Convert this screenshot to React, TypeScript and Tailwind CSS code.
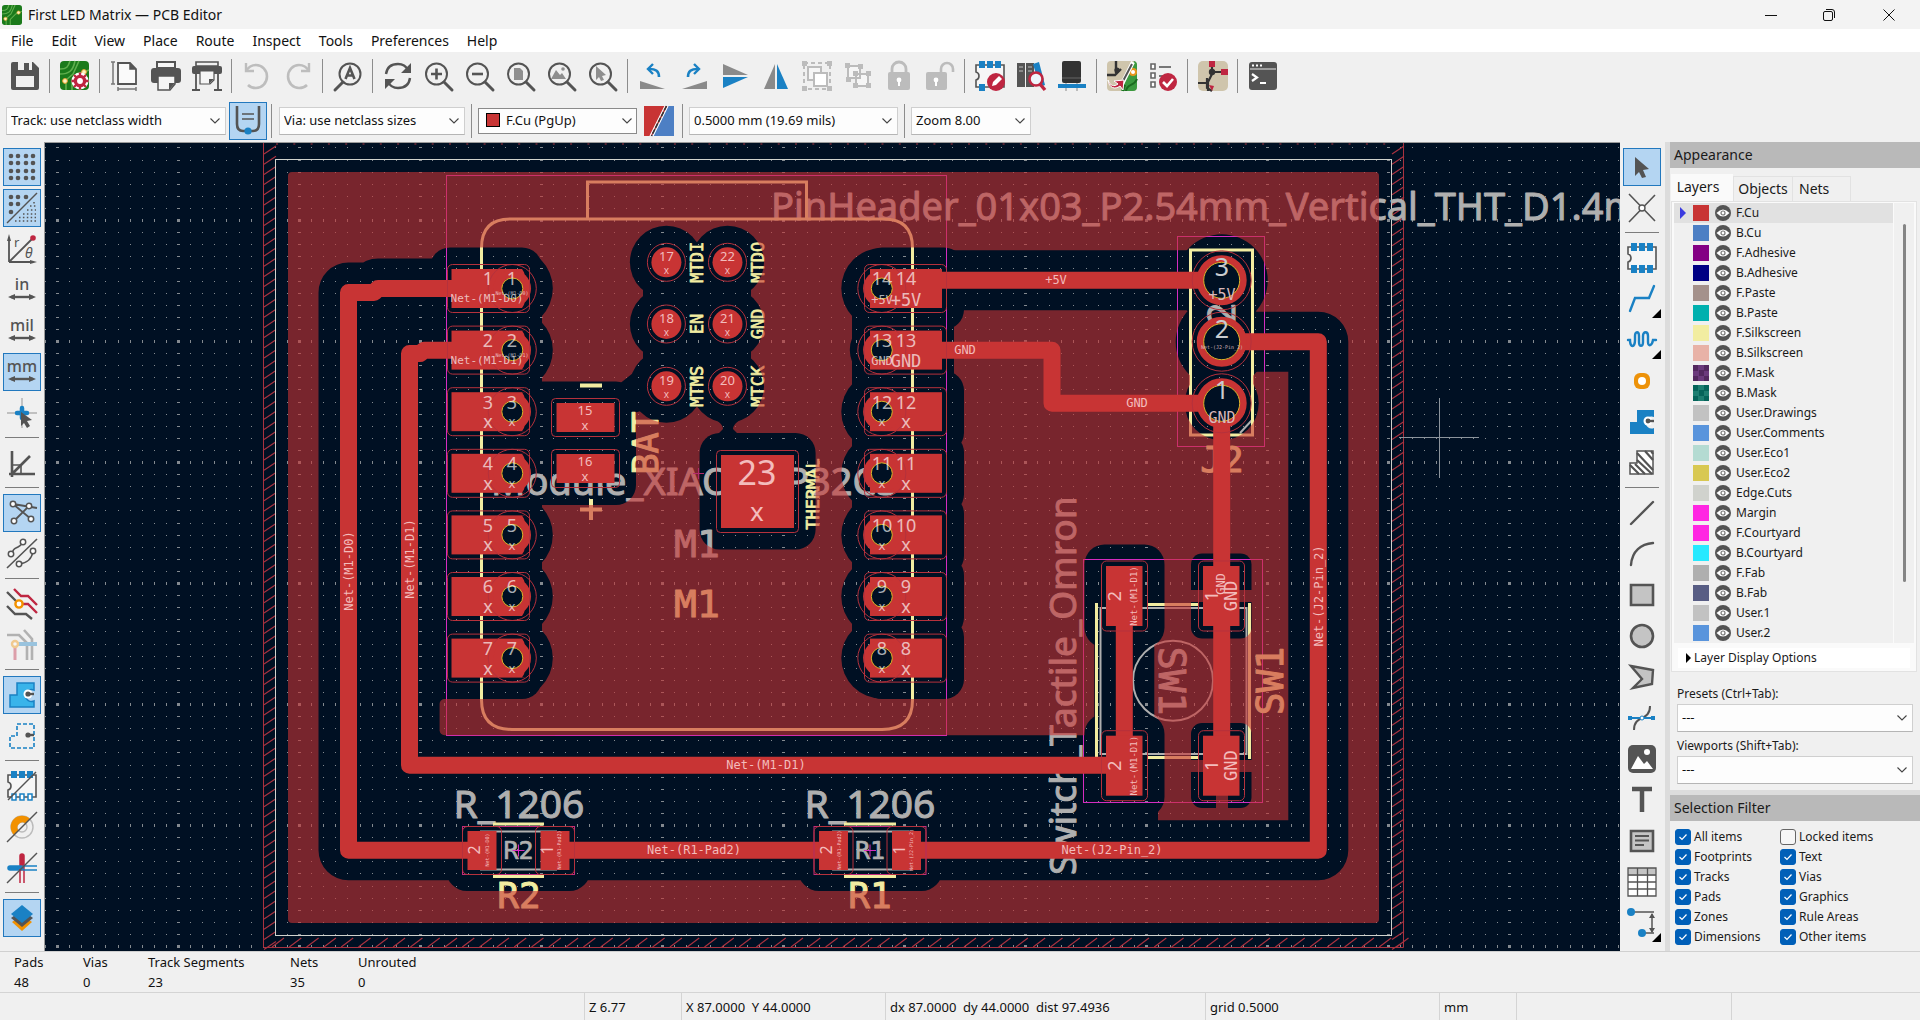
import React from "react";

const G = "#545454";
const B = "#1a81c4";
const R = "#bf2641";
const CU = "#c83434";
const SILK = "#f2eda1";
const FAB = "#afafaf";
const MONO = "'DejaVu Sans Mono', monospace";
const SANS = "'Noto Sans', sans-serif";

type IconProps = { children: React.ReactNode; className?: string };

function Ico({ children, className = "" }: IconProps) {
  return (
    <svg viewBox="0 0 30 30" aria-hidden="true" className={`h-[30px] w-[30px] overflow-visible ${className}`} fill="none">
      {children}
    </svg>
  );
}

/* ---------- top toolbar icons ---------- */

const Magnifier = ({ children }: { children?: React.ReactNode }) => (
  <Ico>
    <circle cx="12.5" cy="13" r="10.5" stroke={G} strokeWidth="2" />
    <path d="M20 21l8 8" stroke={G} strokeWidth="3" strokeLinecap="round" />
    {children}
  </Ico>
);

const boardArt = (
  <>
    <rect width="29" height="29" rx="4" fill="#1b7a1b" />
    <path d="M0 8c7 0 8-2 10-8M0 13c9 0 13-3 15-13M6 29V19l7-6 6-13M12 29v-8l8-8 9-4" stroke="#5fae4d" strokeWidth="1.6" />
    <circle cx="5" cy="20" r="2.4" fill="#fff3c4" stroke="#e8a32c" />
    <circle cx="24" cy="11" r="2.4" fill="#fff3c4" stroke="#e8a32c" />
  </>
);

const IconSave = () => (
  <Ico>
    <path d="M1 3a2 2 0 012-2h20l6 6v20a2 2 0 01-2 2H3a2 2 0 01-2-2z" fill={G} />
    <path d="M8 1h14v8H8zM6 15h18v11H6z" fill="#f0f0f0" />
    <path d="M14 2h5v7h-5z" fill={G} />
  </Ico>
);
const IconBoardSetup = () => (
  <Ico>
    {boardArt}
    <circle cx="20" cy="20" r="5" stroke="#fff" strokeWidth="7" />
    <circle cx="20" cy="20" r="4.6" stroke={R} strokeWidth="3.4" />
    <path d="M20 11.500v4M20 24.500v4M11.500 20h4M24.500 20h4M14 14l3 3M23 23l3 3M26 14l-3 3M17 23l-3 3" stroke={R} strokeWidth="2.400" />
    <circle cx="20" cy="20" r="2.400" fill="#fff" />
  </Ico>
);
const IconPage = () => (
  <Ico>
    <path d="M8 2h12l6 6v15H8z" fill="#fafafa" stroke={G} strokeWidth="1.800" />
    <path d="M20 2v6h6" fill={G} stroke={G} strokeWidth="1.500" />
    <path d="M3 1v22M1 1h4M1 23h4M8 28h18M8 26v4M26 26v4" stroke="#777" strokeWidth="1.500" />
  </Ico>
);
const IconPrint = () => (
  <Ico>
    <path d="M6 1h18v6H6z" stroke={G} strokeWidth="2" fill="#f5f5f5" />
    <rect y="7" width="30" height="15" rx="3" fill={G} />
    <path d="M7 15h17v8l-5 6H7z" fill="#f5f5f5" stroke={G} strokeWidth="1.500" />
    <path d="M24 22l-6 7v-7z" fill={G} />
  </Ico>
);
const IconPlot = () => (
  <Ico>
    <path d="M4 1h22v4H4z" stroke={G} strokeWidth="1.600" />
    <rect y="5" width="30" height="8" rx="2" fill={G} />
    <path d="M4 13v15M26 13v15M0 29h8M22 29h8" stroke={G} strokeWidth="1.800" />
    <path d="M8 10h14v9l-4 4H8z" fill="#f5f5f5" stroke={G} strokeWidth="1.200" />
    <path d="M22 18l-5 5v-5z" fill={G} />
  </Ico>
);
const IconUndo = () => (
  <Ico>
    <path d="M4 2v8h8" stroke="#bdbdbd" strokeWidth="2.400" />
    <path d="M4 10c3-5 6-6 10-6a10.500 11 0 110 23c-3 0-6-1-8-3" stroke="#bdbdbd" strokeWidth="2.600" />
  </Ico>
);
const IconRedo = () => (
  <Ico>
    <path d="M26 2v8h-8" stroke="#bdbdbd" strokeWidth="2.400" />
    <path d="M26 10c-3-5-6-6-10-6a10.500 11 0 100 23c3 0 6-1 8-3" stroke="#bdbdbd" strokeWidth="2.600" />
  </Ico>
);
const IconFind = () => (
  <Ico>
    <circle cx="17" cy="13" r="10.500" stroke={G} strokeWidth="2" />
    <path d="M10 21l-8 8" stroke={G} strokeWidth="3" strokeLinecap="round" />
    <path d="M12.500 18L17 7l4.500 11M14 14.500h6" stroke={G} strokeWidth="2.600" />
  </Ico>
);
const IconRefresh = () => (
  <Ico>
    <path d="M3 13C4 6 9 3 15 3c5 0 8 2 10 6M27 17c-1 7-6 10-12 10-5 0-8-2-10-6" stroke={G} strokeWidth="2.400" />
    <path d="M28 2v10H18zM2 28V18h10z" fill={G} />
  </Ico>
);
const IconRotL = () => (
  <Ico>
    <path d="M2 20v8h25z" fill="#8a8a8a" />
    <path d="M21 16c0-6-3-8-10-8" stroke={B} strokeWidth="2.600" />
    <path d="M15 3l-5 5 5 5" stroke={B} strokeWidth="2.400" />
  </Ico>
);
const IconRotR = () => (
  <Ico>
    <path d="M28 20v8H3z" fill="#8a8a8a" />
    <path d="M9 16c0-6 3-8 10-8" stroke={B} strokeWidth="2.600" />
    <path d="M15 3l5 5-5 5" stroke={B} strokeWidth="2.400" />
  </Ico>
);
const IconFlipV = () => (
  <Ico>
    <path d="M3 3l25 11H3z" fill="#8a8a8a" />
    <path d="M3 27l25-11H3z" fill={B} />
  </Ico>
);
const IconFlipH = () => (
  <Ico>
    <path d="M14 3v25H3z" fill="#8a8a8a" />
    <path d="M16 3v25h11z" fill={B} />
  </Ico>
);
const IconGroup = () => (
  <Ico>
    <path d="M2 2h26v26H2z" stroke="#bcbcbc" strokeWidth="2" strokeDasharray="4 3" />
    <path d="M0 0h5v5H0zM25 0h5v5h-5zM0 25h5v5H0zM25 25h5v5h-5z" fill="#bcbcbc" />
    <path d="M6 6h13v13H6z" fill="#f6f6f6" stroke="#bcbcbc" strokeWidth="2" />
    <path d="M12 12h13v13H12z" fill="#fff" stroke="#bcbcbc" strokeWidth="2" />
  </Ico>
);
const IconUngroup = () => (
  <Ico>
    <path d="M5 5h12v12H5zM13 13h12v12H13z" fill="#f6f6f6" stroke="#bcbcbc" strokeWidth="2" />
    <path d="M2 2h5v5H2zM15 3h5v5h-5zM3 16h5v5H3zM10 10h5v5h-5zM23 10h5v5h-5zM10 22h5v5h-5zM23 22h5v5h-5z" fill="#bcbcbc" />
  </Ico>
);
const IconLock = () => (
  <Ico>
    <path d="M8 14V8a7 7 0 0114 0v6" stroke="#bcbcbc" strokeWidth="2.800" />
    <rect x="4" y="11" width="22" height="18" rx="2" fill="#bcbcbc" />
    <circle cx="15" cy="19" r="2.400" fill="#fff" />
    <path d="M15 19v6" stroke="#fff" strokeWidth="2" />
  </Ico>
);
const IconUnlock = () => (
  <Ico>
    <path d="M16 14V8a6 6 0 0112 0v3" stroke="#bcbcbc" strokeWidth="2.600" />
    <rect x="1" y="11" width="21" height="18" rx="2" fill="#bcbcbc" />
    <circle cx="11" cy="19" r="2.400" fill="#fff" />
    <path d="M11 19v6" stroke="#fff" strokeWidth="2" />
  </Ico>
);
const chipBody = (
  <path d="M1 4h28v22H1v-7c4-1 4-7 0-8z" fill="#f6f6f6" stroke={G} strokeWidth="1.600" />
);
const IconFootprintEdit = () => (
  <Ico>
    {chipBody}
    <path d="M4 0h6v7H4zM12 0h6v7h-6zM20 0h6v7h-6zM4 23h6v7H4z" fill={B} />
    <circle cx="21" cy="21" r="9" fill={R} />
    <path d="M17 25l1-4 6-6 3 3-6 6z" fill="#fff" />
  </Ico>
);
const IconLibrary = () => (
  <Ico>
    <path d="M1 2h8v24H1zM10 2h8v24h-8z" fill={G} />
    <path d="M3 6h4M12 6h4M3 10h4M12 10h4" stroke="#999" strokeWidth="1.500" />
    <path d="M17 3l6-2 6 23-5 2z" fill={B} />
    <circle cx="20" cy="18" r="6.500" fill="#eef5fb" stroke={R} strokeWidth="2.600" />
    <path d="M24 23l5 6" stroke={R} strokeWidth="3.400" />
  </Ico>
);
const Icon3D = () => (
  <Ico>
    <rect x="5" y="0" width="19" height="22" rx="2" fill="#333" />
    <path d="M5 17h19" stroke="#666" />
    <path d="M9 22v8M20 22v8" stroke="#aaa" strokeWidth="1.500" />
    <path d="M1 23h28v4H1z" fill={B} />
  </Ico>
);
const tan = "#cfc5ac";
const IconUpdate = () => (
  <Ico>
    <rect width="30" height="30" rx="4" fill={tan} />
    <path d="M27 0L14 30h12a4 4 0 004-4V4a4 4 0 00-3-4z" fill="#3b9a3f" />
    <path d="M19 30c1-8 8-4 11-12M16 30l2-6" stroke="#1b6b20" strokeWidth="2" />
    <circle cx="26" cy="11" r="3" fill="#fff" stroke="#e8951d" strokeWidth="2" />
    <path d="M9 0v12M0 14h8l6-6" stroke="#333" strokeWidth="2.400" />
    <circle cx="10" cy="9" r="2.600" fill="#333" />
    <path d="M26 1L15 23" stroke="#fff" strokeWidth="4" />
    <path d="M25 3L15 22" stroke={G} strokeWidth="2" />
    <path d="M1 19c2 6 6 7 10 4l-4-3 10-1-1 10-3-4c-5 4-11 2-12-6z" fill={R} stroke="#fff" strokeWidth="1" />
  </Ico>
);
const IconDrc = () => (
  <Ico>
    <path d="M3 3h4v5H3zM3 12h4v5H3zM3 21h4v5H3z" fill="#fff" stroke="#666" strokeWidth="1.600" />
    <path d="M11 6h12M11 15h8" stroke="#777" strokeWidth="2" />
    <circle cx="20" cy="21" r="9" fill={R} />
    <path d="M15 21l4 4 6-7" stroke="#fff" strokeWidth="2.600" />
  </Ico>
);
const IconSchematic = () => (
  <Ico>
    <rect width="30" height="30" rx="5" fill={tan} />
    <path d="M14 4v9l-4 8v9M14 11h12M0 22h10M9 17v10l5 3" stroke="#333" strokeWidth="2.200" />
    <circle cx="14" cy="11" r="3.200" fill="#333" />
    <path d="M11 0h6v6h-6zM23 8h7v6h-7z" fill={R} />
    <path d="M11 24l5 1-2 5z" fill={R} />
  </Ico>
);
const IconTerminal = () => (
  <Ico>
    <rect x="1" y="1" width="28" height="28" rx="3" fill={G} />
    <path d="M2 8h26" stroke="#e8e8e8" strokeWidth="1" />
    <path d="M4 4.500h2M8 4.500h2M12 4.500h2" stroke="#fff" strokeWidth="1.800" />
    <path d="M4 13l5 3.500L4 20M12 22h6" stroke="#fff" strokeWidth="2.200" />
  </Ico>
);

const topIcons: [string, React.ReactNode][] = [
  ["Save", <IconSave />],
  ["|", null],
  ["Board Setup", <IconBoardSetup />],
  ["|", null],
  ["Page Settings", <IconPage />],
  ["Print", <IconPrint />],
  ["Plot", <IconPlot />],
  ["|", null],
  ["Undo", <IconUndo />],
  ["Redo", <IconRedo />],
  ["|", null],
  ["Find", <IconFind />],
  ["|", null],
  ["Refresh", <IconRefresh />],
  ["Zoom In", <Magnifier><path d="M7 13h11M12.500 7.500v11" stroke={G} strokeWidth="2.600" /></Magnifier>],
  ["Zoom Out", <Magnifier><path d="M7 13h11" stroke={G} strokeWidth="2.600" /></Magnifier>],
  ["Zoom to Fit", <Magnifier><path d="M8 7h6l3 3v9H8z" fill="#8e8e8e" /></Magnifier>],
  ["Zoom to Objects", <Magnifier><path d="M4 18l5-9 4 5 2-2 4 6z" fill="#8e8e8e" /><circle cx="16" cy="8" r="1.800" fill="#8e8e8e" /></Magnifier>],
  ["Zoom to Selection", <Magnifier><path d="M8 5l10 9-4 1 2 4-3 1-2-4-3 3z" fill="#8e8e8e" /></Magnifier>],
  ["|", null],
  ["Rotate Counterclockwise", <IconRotL />],
  ["Rotate Clockwise", <IconRotR />],
  ["Mirror Vertically", <IconFlipV />],
  ["Mirror Horizontally", <IconFlipH />],
  ["Group", <IconGroup />],
  ["Ungroup", <IconUngroup />],
  ["Lock", <IconLock />],
  ["Unlock", <IconUnlock />],
  ["|", null],
  ["Footprint Editor", <IconFootprintEdit />],
  ["Footprint Browser", <IconLibrary />],
  ["3D Viewer", <Icon3D />],
  ["|", null],
  ["Update PCB", <IconUpdate />],
  ["Design Rules Checker", <IconDrc />],
  ["|", null],
  ["Schematic Editor", <IconSchematic />],
  ["|", null],
  ["Scripting Console", <IconTerminal />],
];

/* ---------- side toolbar icons ---------- */

const unitIcon = (label: string) => (
  <Ico>
    <text x="15" y="15" textAnchor="middle" fontSize="16" fontWeight="500" fill={G} fontFamily={SANS}>{label}</text>
    <path d="M4 22h22" stroke={G} strokeWidth="2.400" />
    <path d="M1 22l7-3v6zM29 22l-7-3v6z" fill={G} />
  </Ico>
);

const gridDots = [4, 11, 19, 26];

const leftIcons: [string, React.ReactNode, boolean?][] = [
  ["Grid", <Ico>{gridDots.map((y) => gridDots.map((x) => <circle key={`${x}-${y}`} cx={x} cy={y} r="2.300" fill={G} />))}</Ico>, true],
  ["Grid Overrides", (
    <Ico>
      {[[4, 4], [11, 4], [19, 4], [4, 11], [11, 11], [4, 19]].map(([x, y]) => <circle key={`${x}-${y}`} cx={x} cy={y} r="2.300" fill={G} />)}
      <path d="M0 30L30 0" stroke={G} strokeWidth="1.500" />
      <path d="M27 9v3M23 13h6M20 17h9M16 21h13M12 24.500h17M8 28h21" stroke={G} strokeWidth="1.500" strokeDasharray="1.500 2.400" />
    </Ico>
  ), true],
  ["Polar Coordinates", (
    <Ico>
      <path d="M2 28V4M2 28h24M2 28L26 4" stroke={G} strokeWidth="1.800" />
      <path d="M0 7l2-7 2 7zM23 26l7 2-7 2z" fill={G} />
      <circle cx="26" cy="4" r="2.800" fill={R} />
      <text x="7" y="13" fontSize="13" fill={G} fontFamily={SANS}>r</text>
      <text x="18" y="24" fontSize="14" fontStyle="italic" fill={G} fontFamily={SANS}>θ</text>
    </Ico>
  )],
  ["Inches", unitIcon("in")],
  ["Mils", unitIcon("mil")],
  ["Millimeters", unitIcon("mm"), true],
  ["Full-Window Crosshairs", (
    <Ico>
      <path d="M15 0v30M0 15h30" stroke="#b0b0b0" strokeWidth="1.400" />
      <path d="M15 10v10M10 15h10" stroke={B} strokeWidth="4.500" strokeLinecap="round" />
      <path d="M14 14l11 8-5 1 3 5-3 2-3-5-3 3z" fill={G} />
    </Ico>
  )],
  ["|", null],
  ["Line Modes", (
    <Ico>
      <path d="M5 3v26M2 26h26M5 26L23 8" stroke={G} strokeWidth="2.600" />
      <path d="M5 17h9v9" stroke={G} strokeWidth="1.600" />
    </Ico>
  )],
  ["|", null],
  ["Ratsnest", (
    <Ico>
      <path d="M6 6l18 15M22 8L7 23M6 6l24 4" stroke={G} strokeWidth="1.800" />
      {[[6, 6], [22, 8], [7, 23], [24, 21]].map(([x, y]) => <circle key={`${x}-${y}`} cx={x} cy={y} r="2.700" fill="#fff" stroke={G} strokeWidth="1.500" />)}
    </Ico>
  ), true],
  ["Curved Ratsnest", (
    <Ico>
      <path d="M0 29L30 0M5 15c1-5 2-5 6-7s3-3 5-4M26 12c-1 8-5 12-14 13" stroke={G} strokeWidth="1.600" />
      {[[4, 15], [16, 3], [12, 25], [26, 12]].map(([x, y]) => <circle key={`${x}-${y}`} cx={x} cy={y} r="2.700" fill="#fff" stroke={G} strokeWidth="1.500" />)}
    </Ico>
  )],
  ["|", null],
  ["Net Highlight", (
    <Ico>
      <path d="M0 3l12 12M0 17l8 8h11l6 5" stroke={G} strokeWidth="2.400" />
      <path d="M7 0l7 7h7l9 9M12 15h9l9 9" stroke={R} strokeWidth="2.400" />
      <circle cx="12" cy="15" r="3.600" fill="#fff" stroke="#f29100" strokeWidth="2.400" />
    </Ico>
  )],
  ["Net Names", (
    <Ico className="opacity-40">
      <path d="M0 5h12l8 8v17M17 0l8 9v21" stroke={G} strokeWidth="2.600" />
      <path d="M8 14h22" stroke={B} strokeWidth="4" />
      <path d="M8 17v13" stroke={R} strokeWidth="3" />
      <circle cx="8" cy="14" r="3" fill="#fff" stroke="#f29100" strokeWidth="2.400" />
    </Ico>
  )],
  ["|", null],
  ["Zone Fill", (
    <Ico>
      <path d="M10 3h17v7a6 6 0 100 11v6H3V15h7z" fill="#39b4ea" stroke={B} strokeWidth="1.500" />
      <circle cx="21" cy="14" r="4.500" fill="#fff" />
      <path d="M21 14h6" stroke={G} strokeWidth="2.400" />
      <circle cx="21" cy="14" r="2.600" fill={G} />
    </Ico>
  ), true],
  ["Zone Outlines", (
    <Ico>
      <path d="M10 3h17v24H3V15h7z" stroke={B} strokeWidth="1.600" strokeDasharray="4 2" />
      <path d="M21 14h6" stroke={G} strokeWidth="2.400" />
      <circle cx="21" cy="14" r="2.600" fill={G} />
    </Ico>
  )],
  ["|", null],
  ["Sketch Pads", (
    <Ico>
      {chipBody}
      <path d="M4 0h6v7H4zM12 0h6v7h-6zM20 0h6v7h-6z" fill={B} />
      <path d="M5 23h4v6H5zM13 23h4v6h-4zM21 23h4v6h-4z" fill="#fff" stroke={B} strokeWidth="1.500" />
      <path d="M1 29L29 1" stroke={G} strokeWidth="1.500" />
    </Ico>
  )],
  ["Sketch Vias", (
    <Ico>
      <circle cx="15" cy="15" r="11" stroke="#bbb" strokeWidth="1.400" />
      <circle cx="15" cy="15" r="5" stroke="#bbb" strokeWidth="1.400" />
      <path d="M7 23A11.300 11.300 0 1123 7l-4.500 4.500a5 5 0 00-7 7z" fill="#f29100" />
      <path d="M0 30L30 0" stroke={G} strokeWidth="1.500" />
    </Ico>
  )],
  ["Sketch Tracks", (
    <Ico>
      <path d="M15 3v12" stroke={R} strokeWidth="5.500" strokeLinecap="round" />
      <path d="M3 15h11" stroke={B} strokeWidth="5.500" strokeLinecap="round" />
      <path d="M13 16v14M17 16v14" stroke={R} strokeWidth="1.500" />
      <path d="M16 13h14M16 17h14" stroke={B} strokeWidth="1.500" />
      <path d="M0 30L30 0" stroke={G} strokeWidth="1.500" />
    </Ico>
  )],
  ["|", null],
  ["Layers Manager", (
    <Ico>
      <path d="M5 19l10-7 10 7-10 9z" fill="#f29100" />
      <path d="M4 15l11-8 11 8-11 9z" fill={G} />
      <path d="M4 11L15 2l11 9-11 9z" fill={B} />
    </Ico>
  ), true],
];

const rightIcons: [string, React.ReactNode, boolean?, boolean?][] = [
  ["Select", <Ico><path d="M8 5l14 12-6 1 3 7-4 1-3-6-4 4z" fill={G} /></Ico>, true],
  ["Local Ratsnest", (
    <Ico>
      <path d="M2 1l26 27M28 2L2 29" stroke={G} strokeWidth="1.600" />
      <circle cx="15" cy="15" r="3" fill="#fff" stroke={G} strokeWidth="1.400" />
    </Ico>
  )],
  ["|", null],
  ["Place Footprint", (
    <Ico>
      {chipBody}
      <path d="M4 0h6v8H4zM12 0h6v8h-6zM20 0h6v8h-6zM4 22h6v8H4zM12 22h6v8h-6zM20 22h6v8h-6z" fill={B} />
    </Ico>
  )],
  ["Route Track", <Ico><path d="M3 27l5-13h14l5-12" stroke={B} strokeWidth="2.400" strokeLinecap="round" /></Ico>, false, true],
  ["Tune Length", <Ico><path d="M1 15h2c0 8 5 8 5 0V11c0-5 4-5 4 0v6c0 5 4 5 4 0v-6c0-5 5-5 5 0v6c0 5 4 4 5-2h3" stroke={B} strokeWidth="2.400" strokeLinecap="round" /></Ico>, false, true],
  ["Via", (
    <Ico>
      <rect x="7" y="7" width="16" height="16" rx="6" fill="#ed9209" />
      <circle cx="15" cy="15" r="4" fill="#fff" />
    </Ico>
  )],
  ["Zone", (
    <Ico>
      <path d="M10 3h17v7a6 6 0 100 11v6H3V15h7z" fill={B} />
      <circle cx="21" cy="14" r="4.500" fill="#fff" />
      <path d="M21 14h6" stroke={G} strokeWidth="2.400" />
      <circle cx="21" cy="14" r="2.400" fill={G} />
    </Ico>
  )],
  ["Rule Area", (
    <Ico>
      <path d="M10 3h16v23H3V15h7z" fill="#fff" stroke={G} strokeWidth="1.500" />
      <path d="M10 5l16 17M10 12l15 14M18 3l8 9M8 16l10 10M3 17l9 9M24 3l2 3" stroke={G} strokeWidth="2.200" />
    </Ico>
  )],
  ["|", null],
  ["Line", <Ico><path d="M4 26L26 4" stroke={G} strokeWidth="2.400" strokeLinecap="round" /></Ico>],
  ["Arc", <Ico><path d="M4 26C5 12 14 5 26 4" stroke={G} strokeWidth="2.400" strokeLinecap="round" /></Ico>],
  ["Rectangle", <Ico><path d="M4 5h22v20H4z" fill="#c4c4c4" stroke={G} strokeWidth="2.600" /></Ico>],
  ["Circle", <Ico><circle cx="15" cy="15" r="11" fill="#c4c4c4" stroke={G} strokeWidth="2.600" /></Ico>],
  ["Polygon", <Ico><path d="M4 4l22 4-1 14-19 4 9-9z" fill="#c4c4c4" stroke={G} strokeWidth="2.400" /></Ico>],
  ["Bezier", (
    <Ico>
      <path d="M7 27c0-16 16-8 16-24" stroke={G} strokeWidth="2" />
      <path d="M2 15h26" stroke={B} strokeWidth="2" />
      <path d="M1 13h4v4H1zM24 13h4v4h-4z" fill={B} />
      <circle cx="15" cy="15" r="2" fill="#fff" stroke={B} />
    </Ico>
  )],
  ["Image", (
    <Ico>
      <rect x="1" y="1" width="28" height="28" rx="5" fill={G} />
      <path d="M4 25l7-13 6 8 3-3 6 8z" fill="#fff" />
      <circle cx="20" cy="8" r="3" fill="#fff" />
    </Ico>
  )],
  ["Text", <Ico><path d="M5 4h20M15 4v23" stroke={G} strokeWidth="4.500" /></Ico>],
  ["Text Box", (
    <Ico>
      <path d="M4 5h22v20H4z" fill="#c4c4c4" stroke={G} strokeWidth="2.600" />
      <path d="M8 10h14M8 14.500h14M8 19h9" stroke={G} strokeWidth="1.800" />
    </Ico>
  )],
  ["Table", (
    <Ico>
      <path d="M1 1h28v28H1z" fill="#fff" />
      <path d="M1 1h28v8H1z" fill="#c4c4c4" />
      <path d="M1 1h28v28H1zM1 15h28M10.500 1v28M20.500 1v28M1 22h28M1 8h28" stroke={G} strokeWidth="1.300" />
    </Ico>
  )],
  ["Dimension", (
    <Ico>
      <path d="M4 4h23M15 25h12" stroke={G} strokeWidth="1.500" />
      <path d="M25 6v18" stroke={G} strokeWidth="1.500" />
      <path d="M22 10l3-5 3 5zM22 20l3 5 3-5z" fill={G} />
      <circle cx="4" cy="4" r="4" fill={B} />
      <circle cx="15" cy="25" r="4" fill={B} />
    </Ico>
  ), false, true],
];

function SideBar({ items, label }: { items: [string, React.ReactNode, boolean?, boolean?][]; label: string }) {
  return (
    <div role="toolbar" aria-label={label} className="flex w-11 shrink-0 flex-col items-center pt-1">
      {items.map(([name, icon, active, more], i) =>
        name === "|" ? (
          <div key={i} className="flex h-[9px] w-full shrink-0 items-center px-[5px]">
            <div className="h-px w-full bg-[#7c7c7c]" />
          </div>
        ) : (
          <div key={i} className="flex h-[41px] shrink-0 items-center">
            <button
              type="button"
              aria-label={name}
              className={
                active
                  ? "relative flex h-[38px] w-[38px] items-center justify-center border border-[#2278be] bg-[#b4d5f2]"
                  : "relative flex h-[38px] w-[38px] items-center justify-center"
              }
            >
              {icon}
              {more && (
                <svg viewBox="0 0 9 9" className="absolute right-0 bottom-0 h-[9px] w-[9px]" aria-hidden="true">
                  <path d="M9 0v9H0z" fill="#000" />
                </svg>
              )}
            </button>
          </div>
        ),
      )}
    </div>
  );
}

/* ---------- board drawing ---------- */

const rowY = [0, 1, 2, 3, 4, 5, 6].map((i) => 288.5 + 61.6 * i);
const tracks: { d: string; gnd?: boolean }[] = [
  { d: "M500 288.500H378L374 292.500H348.500V850.300H480" },
  { d: "M500 350.300H424L420 353.500H409.500V765.300H1124.300V596" },
  { d: "M555 850.300H832" },
  { d: "M906 850.300H1318.300V341.700H1221.700" },
  { d: "M930 280.300H1221.700" },
  { d: "M930 350.300H1052V403.300H1221.700", gnd: true },
  { d: "M1221.700 403.300V766", gnd: true },
];
const jst = [
  { x: 666.4, n: ["17", "18", "19"], l: ["MTDI", "EN", "MTMS"], lx: 697 },
  { x: 727.5, n: ["22", "21", "20"], l: ["MTDO", "GND", "MTCK"], lx: 758 },
];
const jy = [262.3, 324, 386.3];

function gridPath() {
  let d = "";
  for (let i = -1; i < 131; i++) {
    for (let j = -7; j < 61; j++) {
      const x = Math.round(57 + 12.1 * i);
      const y = Math.round(220 + 12.1 * j);
      const mx = i % 10 === 0;
      const my = j % 10 === 0;
      if (mx && my) d += `M${x - 1} ${y - 1}h3v3h-3z`;
      else if (mx) d += `M${x - 1} ${y}h3v1h-3z`;
      else if (my) d += `M${x} ${y - 1}h1v3h-1z`;
      else d += `M${x} ${y}h1v1h-1z`;
    }
  }
  return d;
}

function hatchPath() {
  let d = "";
  for (let y = 154; y < 950; y += 10.2) d += `M264 ${y}l12 -8M1392 ${y}l12 -8`;
  for (let x = 272; x < 1400; x += 17.3) d += `M${x} 947l12 -9`;
  for (let x = 276; x < 1400; x += 17.3) d += `M${x} 144h2`;
  return d;
}

type LabelProps = {
  x: number;
  y: number;
  s: number;
  fill?: string;
  rot?: number;
  mono?: boolean;
  start?: boolean;
  pen?: number;
  children: string;
};

function Label({ x, y, s, fill = "#f3bcbc", rot = 0, mono, start, pen = 0, children }: LabelProps) {
  return (
    <text
      x={x}
      y={y}
      dy="0.36em"
      fontSize={s}
      fill={fill}
      stroke={pen ? fill : "none"}
      strokeWidth={pen}
      strokeLinejoin="round"
      fontFamily={mono ? MONO : SANS}
      textAnchor={start ? "start" : "middle"}
      transform={rot ? `rotate(${rot} ${x} ${y})` : undefined}
    >
      {children}
    </text>
  );
}

const NUM = "rgba(255,255,255,0.68)";

function Board() {
  const ring = { fill: "none", stroke: "#b5313c", strokeWidth: 1 };
  return (
    <svg
      viewBox="45 143 1575 808"
      preserveAspectRatio="xMinYMin slice"
      className="absolute inset-0 h-full w-full"
      role="img"
      aria-label="PCB layout"
    >
      <defs>
        <mask id="zone" maskUnits="userSpaceOnUse" x="280" y="160" width="1110" height="780">
          <rect x="288" y="172" width="1091" height="751" rx="4" fill="#fff" />
          <g stroke="#000" strokeWidth="60" fill="none" strokeLinejoin="round" strokeLinecap="round">
            {tracks.filter((t) => !t.gnd).map((t) => <path key={t.d} d={t.d} />)}
          </g>
          <g fill="#000">
            <rect x="370" y="310" width="90" height="520" />
            <rect x="370" y="790" width="788" height="40" />
            <rect x="378" y="290" width="70" height="60" />
            <rect x="430" y="247.500" width="112" height="451.500" rx="20" />
            {rowY.map((y, i) => (
              <React.Fragment key={y}>
                <circle cx="512.300" cy={y} r="40.500" />
                <circle cx="881.800" cy={y} r={i === 1 ? 32 : 40.5} />
                {i !== 1 && <rect x="862" y={y - 41} width="102" height="82" rx="20" />}
              </React.Fragment>
            ))}
            <rect x="852" y="285" width="102" height="370" />
            <path d="M530 381.500H616a20 20 0 0120 20V485a20 20 0 01-20 20H530z" />
            <rect x="643" y="262" width="108" height="124" />
            {jst.map((c) => jy.map((y) => <circle key={`${c.x}${y}`} cx={c.x} cy={y} r="36.500" />))}
            <path d="M618 385l20-16 10 40-14 4z" />
            <path d="M706 415q17 7 17 14l-6 6h22l-6-6q0-7 17-14z" />
            <rect x="699.600" y="433" width="116" height="116.500" rx="20" />
            <circle cx="1221.700" cy="280.300" r="46" />
            <circle cx="1221.700" cy="342" r="46" />
            <circle cx="1221.700" cy="403.300" r="37" />
            <rect x="1190" y="290" width="63" height="110" />
            <rect x="1084.500" y="544.500" width="80" height="103" rx="20" />
            <rect x="1084.500" y="714" width="80" height="103" rx="20" />
            <rect x="1191" y="553.500" width="60.500" height="85" rx="11" />
            <rect x="1191" y="723" width="60.500" height="85" rx="11" />
            <rect x="446" y="810" width="144.500" height="81" rx="21" />
            <rect x="798" y="810" width="144.500" height="81" rx="21" />
          </g>
          <g fill="#fff">
            <path d="M1190 590h62v12h-62zM1190 760h62v12h-62zM1216 795h12v15h-12z" />
            <rect x="439.600" y="699" width="120" height="36.300" rx="5" />
          </g>
        </mask>
      </defs>

      <rect x="45" y="143" width="3000" height="2000" fill="#001023" />
      <path d={gridPath()} fill="#848a90" shapeRendering="crispEdges" />

      {/* hatched margin and board edge */}
      <path d={hatchPath()} stroke="#a8323f" strokeWidth="1.200" fill="none" />
      <path d="M263.500 143V947.500H1403.500V143" stroke="#a8323f" fill="none" />
      <rect x="275.500" y="159.500" width="1116" height="776" fill="none" stroke="#d0d2cd" />

      {/* courtyards */}
      <g fill="none" stroke="#d42cc0" strokeWidth="1">
        <rect x="446.500" y="175.500" width="500" height="560" />
        <rect x="1177.500" y="236.500" width="87" height="210" />
        <rect x="1083.500" y="559.500" width="179" height="243" />
      </g>

      {/* fabrication layer */}
      <g fill="none" stroke={FAB} strokeWidth="2">
        <rect x="1100.500" y="608" width="146" height="146" />
        <circle cx="1173" cy="680.700" r="40" />
        <path d="M480 831.500H557M480 869.500H557M832 831.500H909M832 869.500H909" />
        <path d="M1240 433l13-14" />
      </g>
      <Label x={771} y={206} s={38} fill={FAB} start pen={1}>PinHeader_01x03_P2.54mm_Vertical_THT_D1.4mm</Label>
      <Label x={491} y={481} s={38} fill={FAB} start pen={1}>Module_XIAO-ESP32C3</Label>
      <Label x={697} y={543} s={38} fill={FAB} mono pen={1}>M1</Label>
      <Label x={1063} y={875} s={37} fill={FAB} start rot={-90} pen={1}>Switch_Tactile_Omron</Label>
      <Label x={1173} y={681} s={38} fill={FAB} rot={90} mono pen={1}>SW1</Label>
      <Label x={1221} y={325} s={38} fill={FAB} rot={-90} mono pen={1}>J2</Label>
      <Label x={519} y={804} s={39} fill={FAB} pen={1}>R_1206</Label>
      <Label x={870} y={804} s={39} fill={FAB} pen={1}>R_1206</Label>

      {/* silkscreen */}
      <g fill="none" stroke={SILK} strokeWidth="3">
        <path d="M481.500 700V248Q481.500 219 510 219H884Q912.500 219 912.500 248V700Q912.500 729.500 882 729.500H512Q481.500 729.500 481.500 700z" />
        <path d="M587.500 219V182H806.500V219" />
        <rect x="1190.500" y="250" width="62" height="185" />
        <path d="M1096.500 603V757M1249.500 603V759M1148 604.500H1198M1148 757.500H1198" />
        <path d="M493 824H544M493 876.500H544M844 824H896M844 876.500H896" />
        <path d="M580 385.500H602M580 509.500H602M591 499V520" strokeWidth="4" />
      </g>
      {jst.map((c) => c.l.map((t, i) => <Label key={t} x={c.lx} y={jy[i]} s={17} fill={SILK} rot={-90} mono pen={0.7}>{t}</Label>))}
      <Label x={645} y={443} s={35} fill={SILK} rot={-90} mono pen={1}>BAT</Label>
      <Label x={813} y={494} s={17} fill={SILK} rot={-90} mono pen={0.7}>THERMAL</Label>
      <Label x={697} y={603} s={38} fill={SILK} mono pen={1}>M1</Label>
      <Label x={1222} y={459} s={36} fill={SILK} mono pen={1}>J2</Label>
      <Label x={1269} y={681} s={38} fill={SILK} rot={-90} mono pen={1}>SW1</Label>
      <Label x={519} y={895} s={36} fill={SILK} mono pen={1}>R2</Label>
      <Label x={870} y={895} s={36} fill={SILK} mono pen={1}>R1</Label>

      {/* filled copper zone */}
      <rect x="288" y="172" width="1091" height="751" fill={CU} opacity="0.6" mask="url(#zone)" />

      {/* tracks */}
      <g stroke={CU} strokeWidth="17" fill="none" strokeLinejoin="round" strokeLinecap="round">
        {tracks.map((t) => <path key={t.d} d={t.d} />)}
      </g>

      {/* module castellated pads */}
      {rowY.map((y, i) => (
        <g key={y}>
          <rect x="451.500" y={y - 19.5} width="73" height="39" fill={CU} />
          <circle cx="512.300" cy={y} r="18.700" fill={CU} />
          <rect x="870" y={y - 19.5} width="72" height="39" fill={CU} />
          <circle cx="881.800" cy={y} r="18.700" fill={CU} />
          <path d={`M522 ${y - 19.5}l3 5v-5zM522 ${y + 19.5}l3 -5v5z`} fill="#001023" />
          <rect x="447.500" y={y - 24} width="82" height="48" rx="5" {...ring} />
          <circle cx="512.300" cy={y} r="24" {...ring} />
          <rect x="864.500" y={y - 24} width="82" height="48" rx="5" {...ring} />
          <circle cx="881.800" cy={y} r="24" {...ring} />
          <circle cx="512.300" cy={y} r="10.500" fill="#001023" stroke="#d8b42a" />
          <circle cx="881.800" cy={y} r="10.500" fill="#001023" stroke="#d8b42a" />
          <Label x={488} y={y - 9.5} s={18} fill={NUM}>{String(i + 1)}</Label>
          <Label x={512} y={y - 9.5} s={18} fill={NUM}>{String(i + 1)}</Label>
          <Label x={882} y={y - 9.5} s={18} fill={NUM}>{String(14 - i)}</Label>
          <Label x={906} y={y - 9.5} s={18} fill={NUM}>{String(14 - i)}</Label>
          {i > 1 ? (
            <>
              <Label x={488} y={y + 10} s={18} fill={NUM}>x</Label>
              <Label x={512} y={y + 10} s={13} fill={NUM}>x</Label>
              <Label x={882} y={y + 10} s={13} fill={NUM}>x</Label>
              <Label x={906} y={y + 10} s={18} fill={NUM}>x</Label>
            </>
          ) : (
            <>
              <Label x={487} y={y + 10} s={11} fill={NUM} mono>{`Net-(M1-D${i})`}</Label>
              <Label x={512} y={y + 5} s={5} fill={NUM} mono>{`Net-(M1-D${i})`}</Label>
              <Label x={882} y={y + 11} s={12} fill={NUM} mono>{i ? "GND" : "+5V"}</Label>
              <Label x={906} y={y + 11} s={17} fill={NUM} mono>{i ? "GND" : "+5V"}</Label>
            </>
          )}
        </g>
      ))}

      {/* debug, battery and thermal pads */}
      {jst.map((c) =>
        c.n.map((n, i) => (
          <g key={n}>
            <circle cx={c.x} cy={jy[i]} r="15" fill={CU} />
            <circle cx={c.x} cy={jy[i]} r="19" {...ring} />
            <Label x={c.x} y={jy[i] - 6} s={13}>{n}</Label>
            <Label x={c.x} y={jy[i] + 8} s={10}>x</Label>
          </g>
        )),
      )}
      {[417.5, 468.5].map((y, i) => (
        <g key={y}>
          <rect x="556.500" y={y - 14.5} width="58" height="29" fill={CU} />
          <rect x="551.500" y={y - 19} width="68" height="38" rx="4" {...ring} />
          <Label x={585} y={y - 7} s={13}>{String(15 + i)}</Label>
          <Label x={585} y={y + 8} s={13}>x</Label>
        </g>
      ))}
      <rect x="721" y="455" width="73" height="73" fill={CU} />
      <rect x="716.500" y="450.500" width="82" height="82" rx="4" {...ring} />
      <Label x={757} y={473} s={34}>23</Label>
      <Label x={757} y={512} s={26}>x</Label>
      <path d="M693 473.500h11M698.500 468v11" stroke="#b22a6c" />

      {/* pin header */}
      {[280.3, 341.7, 403.3].map((y, i) => (
        <g key={y}>
          <circle cx="1221.700" cy={y} r="21.500" fill="#001023" stroke={CU} strokeWidth="7" />
          <circle cx="1221.700" cy={y} r="18" fill="none" stroke="#d8b42a" />
          <circle cx="1221.700" cy={y} r="29.500" {...ring} />
          <Label x={1222} y={y - 13} s={25} fill="#c9ccd0">{String(3 - i)}</Label>
          <Label x={1222} y={i === 1 ? y + 5 : y + 14} s={i === 1 ? 5 : 15} fill="#d9b8bb" mono>
            {["+5V", "Net-(J2-Pin_2)", "GND"][i]}
          </Label>
        </g>
      ))}

      {/* tactile switch */}
      {[596, 765.7].map((y, i) => (
        <g key={y}>
          <rect x="1106" y={y - 30} width="36.500" height="60" fill={CU} />
          <rect x="1203" y={y - 30} width="36.500" height="60" fill={CU} />
          <rect x="1101.500" y={y - 35} width="46" height="70" rx="5" {...ring} />
          <rect x="1198.500" y={y - 35} width="46" height="70" rx="5" {...ring} />
          <Label x={1115} y={y} s={18} rot={-90}>2</Label>
          <Label x={1134} y={y} s={9} rot={-90} mono>Net-(M1-D1)</Label>
          <Label x={1212} y={y} s={18} rot={-90}>1</Label>
          <Label x={1231} y={y} s={17} rot={-90} mono>GND</Label>
          {i === 0 && <Label x={1221} y={584} s={12} rot={-90} mono>GND</Label>}
        </g>
      ))}

      {/* resistors */}
      {[
        { x: 518.5, ref: "R2", a: "Net-(M1-D0)", b: "Net-(R1-Pad2)" },
        { x: 870, ref: "R1", a: "Net-(R1-Pad2)", b: "Net-(J2-Pin_2)" },
      ].map((r) => (
        <g key={r.ref}>
          <rect x={r.x - 51} y="831" width="29" height="39" fill={CU} />
          <rect x={r.x + 22} y="831" width="29" height="39" fill={CU} />
          <rect x={r.x - 56} y="826.500" width="112" height="48" fill="none" stroke="#c42c7c" />
          <rect x={r.x - 56} y="826.500" width="39" height="48" rx="5" {...ring} />
          <rect x={r.x + 17} y="826.500" width="39" height="48" rx="5" {...ring} />
          <Label x={r.x} y={850} s={25} fill={FAB} mono pen={0.7}>{r.ref}</Label>
          <path d={`M${r.x - 6} 850.500h12M${r.x} 844.500v12`} stroke="#d42cc0" />
          <Label x={r.x - 44} y={850} s={16} rot={-90}>2</Label>
          <Label x={r.x + 29} y={850} s={16} rot={-90}>1</Label>
          <Label x={r.x - 31} y={850} s={5} rot={-90} mono>{r.a}</Label>
          <Label x={r.x + 41} y={850} s={5} rot={-90} mono>{r.b}</Label>
        </g>
      ))}

      {/* net names on tracks */}
      <Label x={349} y={571} s={12} rot={-90} mono>Net-(M1-D0)</Label>
      <Label x={410} y={559} s={12} rot={-90} mono>Net-(M1-D1)</Label>
      <Label x={1319} y={596} s={12} rot={-90} mono>Net-(J2-Pin_2)</Label>
      <Label x={766} y={765} s={12} mono>Net-(M1-D1)</Label>
      <Label x={694} y={850} s={12} mono>Net-(R1-Pad2)</Label>
      <Label x={1112} y={850} s={12} mono>Net-(J2-Pin_2)</Label>
      <Label x={1056} y={280} s={12} mono>+5V</Label>
      <Label x={965} y={350} s={12} mono>GND</Label>
      <Label x={1137} y={403} s={12} mono>GND</Label>

      {/* cursor crosshair */}
      <path d="M1399 437.500h80M1439.500 398v80" stroke="#8c949c" />
    </svg>
  );
}

/* ---------- panels ---------- */

const layers: [string, string][] = [
  ["F.Cu", "bg-[#c83434]"],
  ["B.Cu", "bg-[#4d7fc4]"],
  ["F.Adhesive", "bg-[#840084]"],
  ["B.Adhesive", "bg-[#000084]"],
  ["F.Paste", "bg-[#a4918b]"],
  ["B.Paste", "bg-[#00b0ae]"],
  ["F.Silkscreen", "bg-[#f2eda1]"],
  ["B.Silkscreen", "bg-[#e8b2a7]"],
  ["F.Mask", "bg-[conic-gradient(#6b3a7c_25%,#53285f_0_50%,#6b3a7c_0_75%,#53285f_0)] bg-[length:11px_11px]"],
  ["B.Mask", "bg-[conic-gradient(#1d7e71_25%,#05645a_0_50%,#1d7e71_0_75%,#05645a_0)] bg-[length:11px_11px]"],
  ["User.Drawings", "bg-[#c2c2c2]"],
  ["User.Comments", "bg-[#5994dc]"],
  ["User.Eco1", "bg-[#b4dbd2]"],
  ["User.Eco2", "bg-[#d8c852]"],
  ["Edge.Cuts", "bg-[#d0d2cd]"],
  ["Margin", "bg-[#ff26e2]"],
  ["F.Courtyard", "bg-[#ff26e2]"],
  ["B.Courtyard", "bg-[#26e9ff]"],
  ["F.Fab", "bg-[#afafaf]"],
  ["B.Fab", "bg-[#585d84]"],
  ["User.1", "bg-[#c2c2c2]"],
  ["User.2", "bg-[#5994dc]"],
];

const filters: [string, boolean][] = [
  ["All items", true],
  ["Locked items", false],
  ["Footprints", true],
  ["Text", true],
  ["Tracks", true],
  ["Vias", true],
  ["Pads", true],
  ["Graphics", true],
  ["Zones", true],
  ["Rule Areas", true],
  ["Dimensions", true],
  ["Other items", true],
];

const Eye = () => (
  <svg viewBox="0 0 16 16" className="h-4 w-4" aria-hidden="true">
    <circle cx="8" cy="8" r="8" fill={G} />
    <path d="M1.500 8Q8 1 14.500 8Q8 15 1.500 8z" fill="#fff" />
    <circle cx="8" cy="8" r="2" fill="#fff" stroke="#777" strokeWidth="1.200" />
  </svg>
);

const Chevron = ({ className }: { className: string }) => (
  <svg viewBox="0 0 10 6" className={`pointer-events-none absolute h-[6px] w-[10px] ${className}`} fill="none" aria-hidden="true">
    <path d="M.5.500L5 5l4.500-4.500" stroke="#444" strokeWidth="1.100" />
  </svg>
);

function Combo({ label, value, width, id }: { label?: string; value: string; width: string; id?: string }) {
  return (
    <div className={`relative ${width}`}>
      <select
        id={id}
        aria-label={label}
        className="block h-7 w-full appearance-none border border-[#cfcfcf] border-b-[#b5b5b5] bg-[#fdfdfd] pr-5 pl-1 text-[13px] text-[#111]"
      >
        <option>{value}</option>
      </select>
      <Chevron className="top-[11px] right-[6px]" />
    </div>
  );
}

const VSep = ({ tall }: { tall?: boolean }) => (
  <div className={tall ? "mx-[6px] h-[34px] w-px bg-[#8c8c8c]" : "mx-1 h-[34px] w-px bg-[#8c8c8c]"} />
);

function AppearancePanel() {
  return (
    <aside className="flex w-[250px] shrink-0 flex-col bg-[#f0f0f0] text-xs text-[#1a1a1a]">
      <h2 className="flex h-[26px] shrink-0 items-center bg-[#b9b9b9] px-1 text-[14px] leading-none">Appearance</h2>
      <div role="tablist" className="flex items-end pt-[6px] pl-px text-[14px] leading-none">
        <button type="button" role="tab" aria-selected="true" className="h-[27px] w-[62px] bg-[#fafafa] pr-2 pb-px text-center">
          Layers
        </button>
        <button type="button" role="tab" aria-selected="false" className="h-[25px] w-[60px] border border-b-0 border-[#e2e2e2] text-center">
          Objects
        </button>
        <button type="button" role="tab" aria-selected="false" className="h-[25px] w-[58px] border border-b-0 border-l-0 border-[#e2e2e2] pl-[6px] text-left">
          Nets
        </button>
      </div>
      <div className="mr-[3px] ml-px border border-[#e2e2e2] bg-[#fafafa] px-[2px] pt-px">
        <div className="flex bg-[#f0f0f0]">
          <ul className="flex-1">
            {layers.map(([name, color], i) => (
              <li key={name} className={i === 0 ? "flex h-5 items-center bg-[#e1e1e1]" : "flex h-5 items-center"}>
                <span className="flex w-[19px] justify-center pr-[2px]">
                  {i === 0 && (
                    <svg viewBox="0 0 6 12" className="h-3 w-[6px]" aria-hidden="true">
                      <path d="M0 0l6 6-6 6z" fill="#3b3be0" />
                    </svg>
                  )}
                </span>
                <button type="button" aria-label={`${name} color`} className={`h-4 w-4 ${color}`} />
                <button type="button" aria-label={`Toggle ${name}`} className="mr-[5px] ml-[6px] h-4 w-4">
                  <Eye />
                </button>
                <span className="leading-none">{name}</span>
              </li>
            ))}
          </ul>
          <div className="flex w-[21px] justify-center border-l border-[#fafafa] pt-[21px]">
            <div className="h-[358px] w-[3px] rounded-full bg-[#858585]" />
          </div>
        </div>
        <button type="button" className="mx-1 mt-[5px] mb-[3px] flex h-5 w-[232px] items-center bg-white pl-2 leading-none">
          <svg viewBox="0 0 5 10" className="mr-[3px] h-[10px] w-[5px]" aria-hidden="true">
            <path d="M0 0l5 5-5 5z" fill="#000" />
          </svg>
          Layer Display Options
        </button>
      </div>
      <div className="flex flex-col px-[7px] pt-[14px] pb-[6px]">
        <label htmlFor="presets" className="h-[18px] leading-4">Presets (Ctrl+Tab):</label>
        <Combo id="presets" value="---" width="w-full" />
        <label htmlFor="viewports" className="mt-[6px] h-[18px] leading-4">Viewports (Shift+Tab):</label>
        <Combo id="viewports" value="---" width="w-full" />
      </div>
      <div className="h-[5px] shrink-0 bg-[#dcdcdc]" />
      <h2 className="flex h-[26px] shrink-0 items-center bg-[#b9b9b9] px-1 text-[14px] leading-none">Selection Filter</h2>
      <div className="grid grid-cols-[105px_1fr] px-[5px] pt-[6px]">
        {filters.map(([name, on]) => (
          <label key={name} className="flex h-5 items-center gap-[3px] leading-none">
            <span className="relative h-4 w-4">
              <input
                type="checkbox"
                defaultChecked={on}
                className="peer block h-4 w-4 appearance-none rounded-[3px] border border-[#666] bg-[#f6f6f6] checked:border-[#005fb8] checked:bg-[#005fb8]"
              />
              <svg viewBox="0 0 16 16" className="pointer-events-none absolute inset-0 hidden h-4 w-4 peer-checked:block" fill="none" aria-hidden="true">
                <path d="M4.500 8l2.500 2.500 4.500-5" stroke="#fff" strokeWidth="1.200" />
              </svg>
            </span>
            {name}
          </label>
        ))}
      </div>
    </aside>
  );
}

export default function App() {
  return (
    <div className="flex h-screen flex-col overflow-hidden bg-[#f0f0f0] font-['Noto_Sans',sans-serif] text-[#111]">
      <header className="flex h-[29px] shrink-0 items-center bg-[#f3f3f3] pl-[2px]">
        <svg viewBox="0 0 29 29" className="mr-[6px] h-5 w-5" fill="none" aria-hidden="true">{boardArt}</svg>
        <h1 className="flex-1 text-[14px] leading-none">First LED Matrix — PCB Editor</h1>
        <button type="button" aria-label="Minimize" className="flex h-full w-[58px] items-center justify-center">
          <svg viewBox="0 0 12 12" className="h-3 w-3" aria-hidden="true"><path d="M0 6.500h12" stroke="#111" /></svg>
        </button>
        <button type="button" aria-label="Restore" className="flex h-full w-[58px] items-center justify-center">
          <svg viewBox="0 0 12 12" className="h-3 w-3" fill="none" stroke="#111" aria-hidden="true">
            <rect x=".5" y="2.500" width="9" height="9" rx="1.500" />
            <path d="M3 .5h6a2.500 2.500 0 012.500 2.500v6" />
          </svg>
        </button>
        <button type="button" aria-label="Close" className="flex h-full w-[62px] items-center justify-center">
          <svg viewBox="0 0 12 12" className="h-3 w-3" stroke="#111" aria-hidden="true"><path d="M.5.500l11 11M11.500.500l-11 11" /></svg>
        </button>
      </header>

      <nav className="flex h-[23px] shrink-0 items-center gap-[18px] bg-white pt-px pl-[11px] text-[14px] leading-none">
        {["File", "Edit", "View", "Place", "Route", "Inspect", "Tools", "Preferences", "Help"].map((m) => (
          <button key={m} type="button">{m}</button>
        ))}
      </nav>

      <div role="toolbar" aria-label="Main" className="flex h-[48px] shrink-0 items-center pl-1">
        {topIcons.map(([name, icon], i) =>
          name === "|" ? (
            <VSep key={i} />
          ) : (
            <button key={i} type="button" aria-label={name} className="flex h-[38px] w-[41px] items-center justify-center">
              {icon}
            </button>
          ),
        )}
      </div>

      <div role="toolbar" aria-label="Options" className="flex h-[42px] shrink-0 items-center pl-[6px]">
        <Combo label="Track width" value="Track: use netclass width" width="w-[220px]" />
        <button type="button" aria-label="Use existing track width" className="ml-[3px] flex h-[38px] w-[38px] items-center justify-center border border-[#2278be] bg-[#b4d5f2]">
          <Ico>
            <path d="M4 0v18c0 5 2 7 6 7h10c4 0 6-2 6-7V0" stroke={G} strokeWidth="2.600" />
            <path d="M9 8h12M9 13h12" stroke={G} strokeWidth="1.600" />
            <circle cx="15" cy="25" r="3.600" fill={B} />
          </Ico>
        </button>
        <VSep />
        <div className="w-[3px]" />
        <Combo label="Via size" value="Via: use netclass sizes" width="w-[186px]" />
        <VSep tall />
        <div className="relative w-[159px]">
          <select aria-label="Layer" className="block h-[26px] w-full appearance-none border border-[#8a8a8a] bg-[#fdfdfd] pl-[27px] text-[13px] text-[#111]">
            <option>F.Cu (PgUp)</option>
          </select>
          <span className="pointer-events-none absolute top-[5px] left-2 h-[14px] w-[14px] border border-black bg-[#c83434]" />
          <Chevron className="top-[10px] right-[5px]" />
        </div>
        <button type="button" aria-label="Layer pair" className="ml-[7px] h-[30px] w-[30px]">
          <Ico>
            <path d="M0 0h24L8 30H0z" fill={CU} />
            <path d="M24 0h6v30H8z" fill="#4d7fc4" />
            <path d="M21 0L6 30M24 0L9 30" stroke="#fff" strokeWidth="1.200" />
            <path d="M22.500 0L7.500 30" stroke="#333" strokeWidth="1.600" strokeDasharray="5 1.500" />
          </Ico>
        </button>
        <div className="w-[2px]" />
        <VSep tall />
        <Combo label="Grid" value="0.5000 mm (19.69 mils)" width="w-[209px]" />
        <VSep tall />
        <Combo label="Zoom" value="Zoom 8.00" width="w-[120px]" />
      </div>

      <div className="flex min-h-0 flex-1">
        <SideBar items={leftIcons} label="View options" />
        <main className="relative min-w-0 flex-1 overflow-hidden border-t border-l border-[#9a9a9a]">
          <Board />
        </main>
        <SideBar items={rightIcons} label="Drawing tools" />
        <div className="ml-px w-[5px] shrink-0 bg-[#dcdcdc]" />
        <AppearancePanel />
      </div>

      <section aria-label="Board statistics" className="flex h-[41px] shrink-0 items-center border-t border-[#d0d0d0] pl-[14px] text-[13px] leading-5">
        {[
          ["Pads", "48", "w-[69px]"],
          ["Vias", "0", "w-[65px]"],
          ["Track Segments", "23", "w-[142px]"],
          ["Nets", "35", "w-[68px]"],
          ["Unrouted", "0", "w-[90px]"],
        ].map(([k, v, w]) => (
          <dl key={k} className={w}>
            <dt>{k}</dt>
            <dd>{v}</dd>
          </dl>
        ))}
      </section>

      <footer className="flex h-[28px] shrink-0 items-stretch border-t border-[#d4d4d4] text-[13px] leading-[28px] whitespace-pre">
        <span className="w-[584px]" />
        <span className="w-[97px] border-l border-[#d4d4d4] pl-1">Z 6.77</span>
        <span className="w-[204px] border-l border-[#d4d4d4] pl-1">X 87.0000  Y 44.0000</span>
        <span className="w-[320px] border-l border-[#d4d4d4] pl-1">dx 87.0000  dy 44.0000  dist 97.4936</span>
        <span className="w-[234px] border-l border-[#d4d4d4] pl-1">grid 0.5000</span>
        <span className="w-[77px] border-l border-[#d4d4d4] pl-1">mm</span>
        <span className="w-[215px] border-l border-[#d4d4d4]" />
        <span className="flex-1 border-l border-[#d4d4d4]" />
      </footer>
    </div>
  );
}
